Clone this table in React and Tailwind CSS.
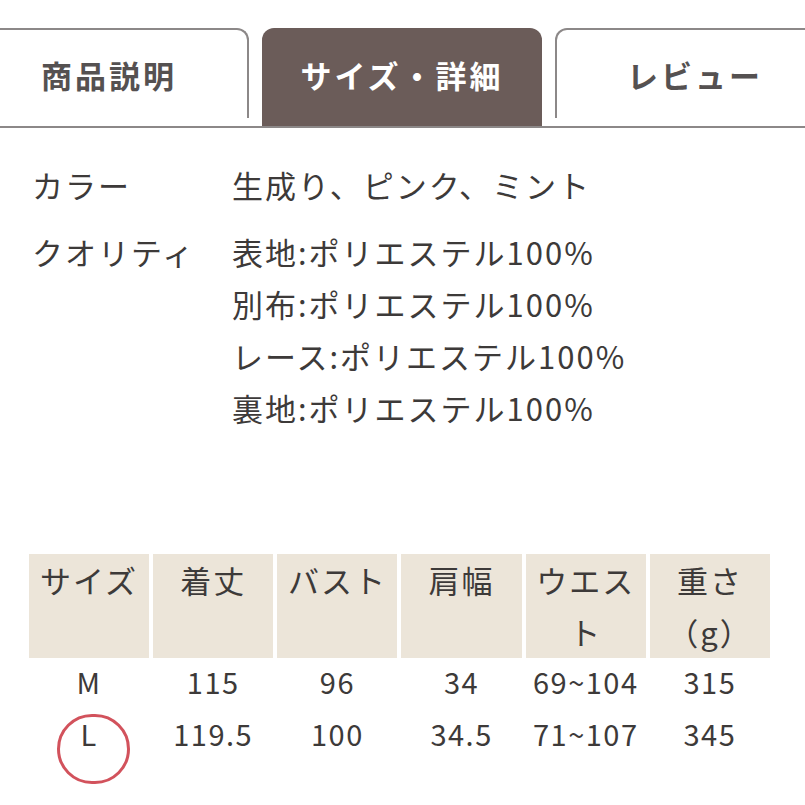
import React from "react";

const font = { fontFamily: '"Noto Sans CJK JP", "Noto Sans", sans-serif' };

const tabs = [
  { label: "商品説明", active: false },
  { label: "サイズ・詳細", active: true },
  { label: "レビュー", active: false },
];

const qualities = [
  "表地:ポリエステル100%",
  "別布:ポリエステル100%",
  "レース:ポリエステル100%",
  "裏地:ポリエステル100%",
];

const headers = [
  ["サイズ"],
  ["着丈"],
  ["バスト"],
  ["肩幅"],
  ["ウエス", "ト"],
  ["重さ", "（g）"],
];

const rows = [
  ["M", "115", "96", "34", "69~104", "315"],
  ["L", "119.5", "100", "34.5", "71~107", "345"],
];

export default function App() {
  return (
    <div className="w-[805px] h-[805px] bg-white overflow-hidden text-[#3d3a39]" style={font}>
      {/* Tabs */}
      <div className="pt-[28px]">
        <div className="flex items-start gap-[13px] ml-[-31px]">
          {tabs.map((t) =>
            t.active ? (
              <div
                key={t.label}
                className="w-[280px] h-[98px] shrink-0 rounded-t-[12px] bg-[#6b5c59] flex items-center justify-center pb-[4px] text-white text-[31px] font-bold tracking-[3px]"
              >
                {t.label}
              </div>
            ) : (
              <div
                key={t.label}
                className="w-[280px] h-[90px] shrink-0 rounded-t-[12px] border-2 border-b-0 border-[#8c8888] flex items-center justify-center pt-[2px] text-[#555151] text-[31px] font-bold tracking-[3px]"
              >
                {t.label}
              </div>
            )
          )}
        </div>
        <div className="h-[2px] bg-[#8c8888]" />
      </div>

      {/* Details */}
      <div className="pt-[31px] pl-[32px] text-[31px] leading-[52px] tracking-[2px]">
        <div className="flex">
          <div className="w-[200px]">カラー</div>
          <div>生成り、ピンク、ミント</div>
        </div>
        <div className="flex mt-[15px]">
          <div className="w-[200px]">クオリティ</div>
          <div>
            {qualities.map((q) => (
              <div key={q}>{q}</div>
            ))}
          </div>
        </div>
      </div>

      {/* Size table */}
      <div className="ml-[29px] w-[741px] mt-[120px]">
        <div className="grid grid-cols-6 gap-x-[4px]">
          {headers.map((h, i) => (
            <div
              key={i}
              className="h-[104px] bg-[#ece5d9] text-center text-[31px] leading-[52px] tracking-[2px]"
            >
              {h.map((line) => (
                <div key={line}>{line}</div>
              ))}
            </div>
          ))}
        </div>
        <div className="mt-[-3px]">
          {rows.map((r) => (
            <div key={r[0]} className="grid grid-cols-6 gap-x-[4px]">
              {r.map((c, i) => (
                <div key={i} className="relative text-center text-[29px] leading-[52px] tracking-[1.5px]">
                  {c}
                  {c === "L" && (
                    <div className="absolute left-[28px] top-[7px] w-[73px] h-[70px] rounded-full border-[3px] border-[#d2525c]" />
                  )}
                </div>
              ))}
            </div>
          ))}
        </div>
      </div>
    </div>
  );
}
